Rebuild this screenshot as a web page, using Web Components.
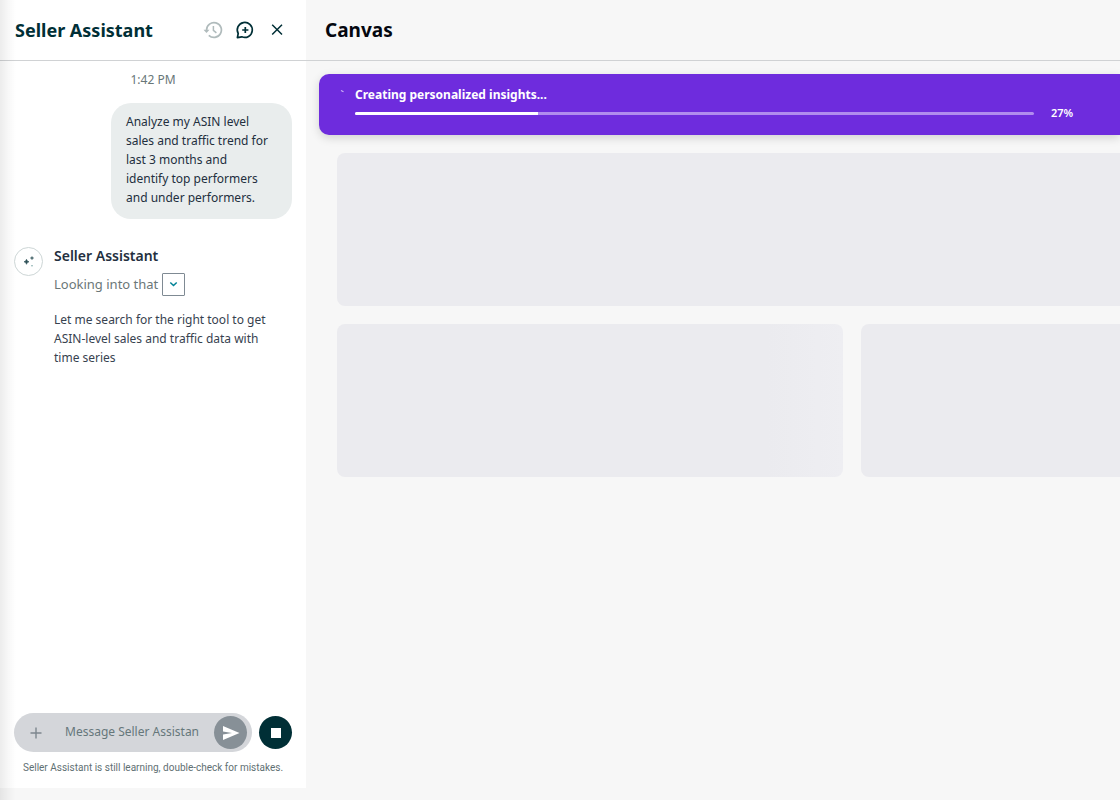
<!DOCTYPE html>
<html lang="en">
<head>
<meta charset="utf-8">
<meta name="viewport" content="width=device-width, initial-scale=1">
<title>Seller Assistant</title>
<style>
  body { margin: 0; background: #f7f7f7; font-family: "Noto Sans", "Open Sans", sans-serif; }
</style>
</head>
<body>
<seller-app>
  <assistant-panel slot="panel">
    <chat-time>1:42 PM</chat-time>
    <user-message>Analyze my ASIN level<br>sales and traffic trend for<br>last 3 months and<br>identify top performers<br>and under performers.</user-message>
    <agent-message name="Seller Assistant" status="Looking into that">Let me search for the right tool to get<br>ASIN-level sales and traffic data with<br>time series</agent-message>
    <chat-composer slot="composer"></chat-composer>
  </assistant-panel>
  <canvas-view slot="canvas" heading="Canvas">
    <progress-banner label="Creating personalized insights..." value="27"></progress-banner>
    <skeleton-grid></skeleton-grid>
  </canvas-view>
</seller-app>

<script>
const define = (name, html, setup) => {
  customElements.define(name, class extends HTMLElement {
    constructor() {
      super();
      this.attachShadow({ mode: 'open' }).innerHTML = html;
    }
    connectedCallback() {
      if (setup) setup(this, this.shadowRoot);
    }
  });
};

define('seller-app', `
  <style>
    :host { display: grid; grid-template-columns: 306px minmax(0, 1fr); min-height: 100vh; position: relative; overflow: hidden; }
    /* soft shade along the left window edge */
    :host::after { content: ""; position: absolute; inset: 0 auto 0 0; width: 16px; pointer-events: none;
      background: linear-gradient(to right, rgba(0,0,0,.075), rgba(0,0,0,.03) 50%, transparent); }
  </style>
  <slot name="panel"></slot><slot name="canvas"></slot>
`);

define('assistant-panel', `
  <style>
    :host { display: flex; flex-direction: column; background: #fff; margin-bottom: 12px; }
    header { display: flex; align-items: center; height: 60px; padding: 0 15px; border-bottom: 1px solid #d0d2d4; }
    h1 { margin: 0; flex: 1; font-size: 18px; line-height: 24px; font-weight: 700; color: #002f36; white-space: nowrap; }
    nav { display: flex; gap: 4px; }
    button { display: grid; place-items: center; width: 28px; height: 28px; padding: 0; border: 0; background: none; color: #002f36; }
    button:disabled { color: #b0bbbc; }
    svg { display: block; width: 20px; height: 20px; fill: none; stroke: currentColor; stroke-width: 1.7; }
    main { flex: 1; display: flex; flex-direction: column; padding: 10px 14px; }
  </style>
  <header>
    <h1>Seller Assistant</h1>
    <nav>
      <button disabled aria-label="History"><svg viewBox="0 0 20 20"><path d="M3.600 10a7.400 7.400 0 1 1 2.200 5.300"/><path d="M.5 9.700h6L3.500 12.900z" fill="currentColor" stroke="none"/><path d="M10.400 6v4.400l3 2.400" stroke-width="1.500"/></svg></button>
      <button aria-label="New chat"><svg viewBox="0 0 20 20"><path d="M2.400 17.600l.8-4.100A7.500 7.500 0 1 1 6.800 16.800z" stroke-linejoin="round"/><path d="M10.300 6.900v6.200M7.200 10h6.200"/></svg></button>
      <button aria-label="Close"><svg viewBox="0 0 20 20"><path d="M5.200 4.700l9.800 9.800M15 4.700l-9.800 9.800" stroke-width="1.500"/></svg></button>
    </nav>
  </header>
  <main><slot></slot></main>
  <slot name="composer"></slot>
`);

define('chat-time', `
  <style>:host { display: block; text-align: center; font-size: 12px; line-height: 18px; color: #687778; }</style>
  <slot></slot>
`);

define('user-message', `
  <style>
    :host { display: block; align-self: flex-end; box-sizing: border-box; width: 181px; margin-top: 14px; padding: 9px 15px 12px;
      border-radius: 20px; background: #e9eded; color: #232f3e; font-size: 12px; line-height: 19px; white-space: nowrap; }
  </style>
  <slot></slot>
`);

define('agent-message', `
  <style>
    :host { display: flex; gap: 11px; margin-top: 28px; }
    .avatar { flex: none; box-sizing: border-box; width: 29px; height: 29px; border: 1px solid #cdd6d6; border-radius: 50%; display: grid; place-items: center; }
    .avatar svg { width: 15px; height: 15px; fill: #2d5057; }
    h2 { margin: 0; font-size: 14px; line-height: 18px; font-weight: 600; color: #232f3e; }
    .status { display: flex; align-items: center; gap: 4px; margin-top: 8px; font-size: 13px; line-height: 19px; color: #6b7778; }
    button { display: grid; place-items: center; box-sizing: border-box; width: 23px; height: 23px; padding: 0; border: 1px solid #7f8a93; border-radius: 1px; background: #fff; }
    button svg { width: 9px; height: 9px; fill: none; stroke: #008296; stroke-width: 1.5; }
    p { margin: 14px 0 0; font-size: 12px; line-height: 19px; color: #37424f; white-space: nowrap; }
  </style>
  <div class="avatar"><svg viewBox="0 0 15 15"><path d="M5.500 5.300Q5.900 7.400 8 7.800 5.900 8.200 5.500 10.300 5.100 8.200 3 7.800 5.100 7.400 5.500 5.300z" stroke="#2d5057" stroke-width=".6"/><path d="M11 2.200Q11.300 3.700 13 4 11.300 4.300 11 5.900 10.700 4.300 9 4 10.700 3.700 11 2.200z" stroke="#2d5057" stroke-width=".2"/><circle cx="11" cy="11.700" r=".8" fill="#7aa5a5"/></svg></div>
  <div>
    <h2></h2>
    <div class="status"><span></span><button aria-label="Show steps"><svg viewBox="0 0 9 9"><path d="M1.300 2.500l3.200 3 3.200-3"/></svg></button></div>
    <p><slot></slot></p>
  </div>
`, (el, root) => {
  root.querySelector('h2').textContent = el.getAttribute('name');
  root.querySelector('span').textContent = el.getAttribute('status');
});

define('chat-composer', `
  <style>
    :host { display: block; padding: 0 14px 12px; }
    form { display: flex; align-items: center; gap: 7px; }
    .field { flex: 1; min-width: 0; box-sizing: border-box; height: 39px; padding: 3px 5px; border-radius: 20px; background: #d4d6da; display: flex; align-items: center; }
    button { flex: none; display: grid; place-items: center; width: 33px; height: 33px; padding: 0; border: 0; border-radius: 50%; }
    button svg { display: block; }
    .add { background: none; color: #7d878e; }
    .send { background: #879097; color: #fff; }
    .stop { background: #002f36; color: #fff; }
    input { flex: 1; min-width: 0; margin: 0 15px 2px 13px; padding: 0; border: 0; outline: 0; background: none; font: inherit; font-size: 12px; line-height: 20px; color: #232f3e; }
    input::placeholder { color: #66777a; opacity: 1; }
    small { display: block; margin-top: 8px; text-align: center; font-family: Roboto, sans-serif; font-size: 10px; line-height: 16px; color: #5f7073; white-space: nowrap; }
  </style>
  <form>
    <div class="field">
      <button type="button" class="add" aria-label="Attach"><svg width="12" height="12" viewBox="0 0 12 12"><path d="M6 .5v11M.5 6h11" fill="none" stroke="currentColor" stroke-width="1.4"/></svg></button>
      <input type="text" aria-label="Message" placeholder="Message Seller Assistant">
      <button type="button" class="send" aria-label="Send"><svg width="18" height="16" viewBox="0 0 18 16"><path d="M1 1l16.500 7L1 15V9.400L10 8 1 6.600z" fill="currentColor"/></svg></button>
    </div>
    <button type="button" class="stop" aria-label="Stop"><svg width="10" height="10" viewBox="0 0 10 10"><path d="M0 0h10v10H0z" fill="currentColor"/></svg></button>
  </form>
  <small>Seller Assistant is still learning, double-check for mistakes.</small>
`);

define('canvas-view', `
  <style>
    :host { display: block; min-width: 0; overflow: hidden; }
    header { display: flex; align-items: center; height: 60px; padding-left: 19px; border-bottom: 1px solid #d0d2d4; }
    h1 { margin: 0; font-size: 19px; line-height: 24px; font-weight: 700; color: #04070f; }
    main { padding: 13px 0 0 13px; }
  </style>
  <header><h1></h1></header>
  <main><slot></slot></main>
`, (el, root) => { root.querySelector('h1').textContent = el.getAttribute('heading'); });

define('progress-banner', `
  <style>
    :host { display: flex; box-sizing: border-box; height: 61px; padding: 12px 45px 0 20px; border-radius: 10px 0 0 10px; background: #6e2cdd; color: #fff;
      box-shadow: 0 3px 10px rgba(0,0,0,.15); }
    .spinner { flex: none; width: 16px; height: 16px; }
    .body { flex: 1; min-width: 0; }
    .label { display: block; font-size: 12px; line-height: 18px; font-weight: 700; }
    .row { display: flex; align-items: center; gap: 17px; }
    .track { flex: 1; height: 3px; border-radius: 2px; background: #b18cee; overflow: hidden; }
    .bar { height: 3px; background: #fff; }
    output { font-size: 11px; line-height: 18px; font-weight: 600; min-width: 24px; }
  </style>
  <svg class="spinner" viewBox="0 0 16 16"><path d="M2 4.500l2.500 1.200" stroke="#cdb5f5" stroke-width="1.100" fill="none"/></svg>
  <div class="body">
    <span class="label" id="label"></span>
    <div class="row">
      <div class="track" role="progressbar" aria-labelledby="label"><div class="bar"></div></div>
      <output></output>
    </div>
  </div>
`, (el, root) => {
  const value = el.getAttribute('value');
  root.querySelector('.label').textContent = el.getAttribute('label');
  root.querySelector('.track').setAttribute('aria-valuenow', value);
  root.querySelector('.bar').style.width = value + '%';
  root.querySelector('output').textContent = value + '%';
});

define('skeleton-grid', `
  <style>
    /* wider than the view: the second column runs on past the window edge */
    :host { display: grid; grid-template-columns: repeat(2, calc(65% - 3px)); gap: 18px; margin: 18px 0 0 18px; }
    div { height: 153px; border-radius: 8px; background: #ebebef; }
    .wide { grid-column: 1 / -1; }
    .sheen { background: linear-gradient(to right, #ebebef 85%, #eeeef2); }
  </style>
  <div class="wide"></div><div class="sheen"></div><div></div>
`);
</script>
</body>
</html>
